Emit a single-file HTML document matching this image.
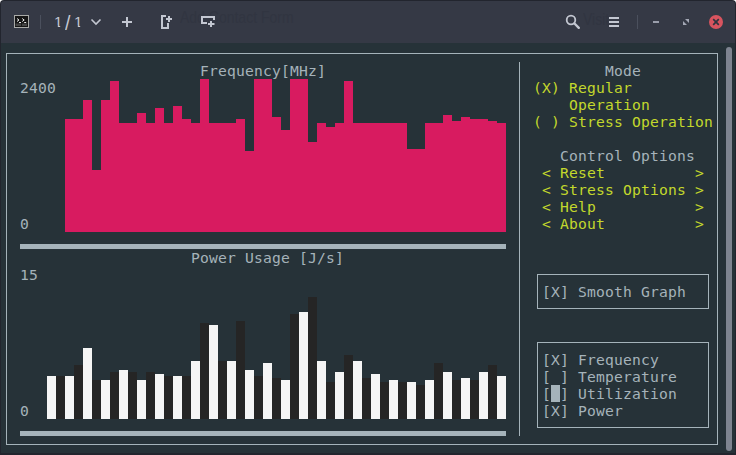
<!DOCTYPE html>
<html><head><meta charset="utf-8"><title>s-tui</title>
<style>
html,body{margin:0;padding:0;background:#fff;}
body{width:736px;height:455px;overflow:hidden;position:relative}
.abs{position:absolute}
#win{position:absolute;left:0;top:0;width:736px;height:455px;background:#22252e;border-radius:4px 4px 0 0;overflow:hidden}
#tb{position:absolute;left:1px;top:1px;width:734px;height:42px;background:#353945;border-radius:3px 3px 0 0}
#term{position:absolute;left:1px;top:43px;width:734px;height:410px;background:#263238}
.t{position:absolute;height:17px;line-height:17px;font-family:"DejaVu Sans Mono","Liberation Mono",monospace;font-size:14.6667px;letter-spacing:0.17px;white-space:pre}
.tt{font-family:"Liberation Sans",sans-serif;font-size:15px;line-height:18px;color:#c3c7d1;letter-spacing:1px}
.gh{font-family:"Liberation Sans",sans-serif;font-size:14px;line-height:16px;color:#313541;transform:scaleY(1.150);transform-origin:0 50%;white-space:pre}
#sb{position:absolute;left:726px;top:47px;width:6px;height:404px;border-radius:3px;background:#7e8490}
</style></head><body>
<div id="win">
<div id="tb"></div>
<div id="term"></div>

<div class="abs" style="left:13.500px;top:15px;width:15px;height:13px;background:#151515;border:1px solid #a9aaa8;box-sizing:border-box"></div>
<div class="abs gh" id="g1" style="left:180px;top:9px">Add Contact Form</div><div class="abs gh" id="g2" style="left:583px;top:11px">Visit</div>
<svg class="abs" style="left:0;top:0" width="736" height="44" viewBox="0 0 736 44">
 <g fill="none" stroke="#e8e8e8" stroke-width="1">
  <path d="M17 18.500l2 1.500l-2 1.500M19 22.500h2M22.200 18.500l2 1.500l-2 1.500M24.200 22.500h2"/>
 </g>
 <rect x="15.500" y="23.500" width="5.700" height="2.500" fill="#444"/><rect x="22" y="23.500" width="5" height="2.500" fill="#444"/>
 <rect x="40" y="15" width="1" height="14" fill="#4b505d"/>
 <path d="M91.500 19.500l4.500 4.500l4.500-4.500" fill="none" stroke="#c3c7d1" stroke-width="1.600"/>
 <path d="M127 17v10M122 22h10" fill="none" stroke="#c3c7d1" stroke-width="2"/>
 <!-- split v -->
 <path d="M166 16h-4v12h6v-5" fill="none" stroke="#c3c7d1" stroke-width="2"/>
 <path d="M168 16h2v6h-2zM166 18h6v2h-6z" fill="#c3c7d1"/>
 <!-- split h -->
 <path d="M207 23h-5v-6h12v3" fill="none" stroke="#c3c7d1" stroke-width="2"/>
 <path d="M210 21h2v6h-2zM208 23h6.500v2h-6.500z" fill="#c3c7d1"/>
 <!-- search -->
 <circle cx="571" cy="20" r="4.300" fill="none" stroke="#c3c7d1" stroke-width="1.800"/>
 <path d="M574.500 23.500l4.300 4.300" stroke="#c3c7d1" stroke-width="2.400" stroke-linecap="round"/>
 <!-- menu -->
 <path d="M609 18h10M609 22h10M609 26h10" stroke="#c3c7d1" stroke-width="2"/>
 <rect x="637" y="15" width="1" height="14" fill="#4b505d"/>
 <rect x="653" y="21" width="6" height="2" fill="#9a9eab"/>
 <path d="M685 19h4v4zM683 21v4h4z" fill="#a3a7b4"/>
 <circle cx="716" cy="22" r="7" fill="#d8545f"/>
 <path d="M713.200 19.200l5.600 5.600M718.800 19.200l-5.600 5.600" stroke="#2f343f" stroke-width="1.700"/>
</svg>
<div class="abs tt" style="left:54px;top:13px;clip-path:polygon(0 0,6.200px 0,6.200px 18px,3.800px 18px,3.800px 12.400px,0 12.400px)">1</div><div class="abs tt" style="left:65px;top:14.200px;transform:scale(1.300,1.320);transform-origin:0 50%">/</div><div class="abs tt" style="left:74px;top:13px;clip-path:polygon(0 0,6.200px 0,6.200px 18px,3.800px 18px,3.800px 12.400px,0 12.400px)">1</div>

<svg class="abs" style="left:0;top:0" width="736" height="455" viewBox="0 0 736 455" shape-rendering="crispEdges"><path d="M65 232V119h9V119h9V100h9V170h9V100h9V81h9V123h9V123h9V113h9V123h9V108h9V123h9V106h9V119h9V123h9V79h9V123h9V123h9V123h9V119h9V151h9V79h9V79h9V117h9V130h9V79h9V79h9V142h9V123h9V127h9V123h9V81h9V123h9V123h9V123h9V123h9V123h9V123h9V149h9V149h9V123h9V123h9V115h9V121h9V117h9V119h9V119h9V121h9V123h9V232Z" fill="#d81b60"/><rect x="47" y="376" width="9" height="43" fill="#f5f5f5"/><rect x="56" y="376" width="9" height="43" fill="#252525"/><rect x="65" y="376" width="9" height="43" fill="#f5f5f5"/><rect x="74" y="365" width="9" height="54" fill="#252525"/><rect x="83" y="348" width="9" height="71" fill="#f5f5f5"/><rect x="92" y="380" width="9" height="39" fill="#252525"/><rect x="101" y="380" width="9" height="39" fill="#f5f5f5"/><rect x="110" y="372" width="9" height="47" fill="#252525"/><rect x="119" y="370" width="9" height="49" fill="#f5f5f5"/><rect x="128" y="372" width="9" height="47" fill="#252525"/><rect x="137" y="380" width="9" height="39" fill="#f5f5f5"/><rect x="146" y="372" width="9" height="47" fill="#252525"/><rect x="155" y="374" width="9" height="45" fill="#f5f5f5"/><rect x="164" y="376" width="9" height="43" fill="#252525"/><rect x="173" y="376" width="9" height="43" fill="#f5f5f5"/><rect x="182" y="376" width="9" height="43" fill="#252525"/><rect x="191" y="361" width="9" height="58" fill="#f5f5f5"/><rect x="200" y="323" width="9" height="96" fill="#252525"/><rect x="209" y="325" width="9" height="94" fill="#f5f5f5"/><rect x="218" y="361" width="9" height="58" fill="#252525"/><rect x="227" y="361" width="9" height="58" fill="#f5f5f5"/><rect x="236" y="321" width="9" height="98" fill="#252525"/><rect x="245" y="370" width="9" height="49" fill="#f5f5f5"/><rect x="254" y="376" width="9" height="43" fill="#252525"/><rect x="263" y="363" width="9" height="56" fill="#f5f5f5"/><rect x="272" y="378" width="9" height="41" fill="#252525"/><rect x="281" y="380" width="9" height="39" fill="#f5f5f5"/><rect x="290" y="314" width="9" height="105" fill="#252525"/><rect x="299" y="312" width="9" height="107" fill="#f5f5f5"/><rect x="308" y="297" width="9" height="122" fill="#252525"/><rect x="317" y="361" width="9" height="58" fill="#f5f5f5"/><rect x="326" y="382" width="9" height="37" fill="#252525"/><rect x="335" y="372" width="9" height="47" fill="#f5f5f5"/><rect x="344" y="355" width="9" height="64" fill="#252525"/><rect x="353" y="361" width="9" height="58" fill="#f5f5f5"/><rect x="362" y="378" width="9" height="41" fill="#252525"/><rect x="371" y="374" width="9" height="45" fill="#f5f5f5"/><rect x="380" y="382" width="9" height="37" fill="#252525"/><rect x="389" y="380" width="9" height="39" fill="#f5f5f5"/><rect x="398" y="382" width="9" height="37" fill="#252525"/><rect x="407" y="382" width="9" height="37" fill="#f5f5f5"/><rect x="416" y="385" width="9" height="34" fill="#252525"/><rect x="425" y="380" width="9" height="39" fill="#f5f5f5"/><rect x="434" y="363" width="9" height="56" fill="#252525"/><rect x="443" y="372" width="9" height="47" fill="#f5f5f5"/><rect x="452" y="380" width="9" height="39" fill="#252525"/><rect x="461" y="378" width="9" height="41" fill="#f5f5f5"/><rect x="470" y="380" width="9" height="39" fill="#252525"/><rect x="479" y="372" width="9" height="47" fill="#f5f5f5"/><rect x="488" y="365" width="9" height="54" fill="#252525"/><rect x="497" y="376" width="9" height="43" fill="#f5f5f5"/><rect x="20" y="244" width="486" height="5" fill="#a5b3ba"/><rect x="20" y="431" width="486" height="5" fill="#a5b3ba"/><rect x="6.5" y="53.5" width="711" height="391" fill="none" stroke="#a5b3ba" stroke-width="1"/><rect x="519" y="62" width="1" height="374" fill="#a5b3ba"/><rect x="537.5" y="274.5" width="171" height="34" fill="none" stroke="#a5b3ba" stroke-width="1"/><rect x="537.5" y="342.5" width="171" height="85" fill="none" stroke="#a5b3ba" stroke-width="1"/><rect x="551" y="385" width="9" height="17" fill="#a5b3ba"/></svg><div class="t" style="left:200px;top:62px;color:#a5b3ba">Frequency[MHz]</div><div class="t" style="left:20px;top:79px;color:#a5b3ba">2400</div><div class="t" style="left:20px;top:215px;color:#a5b3ba">0</div><div class="t" style="left:191px;top:249px;color:#a5b3ba">Power Usage [J/s]</div><div class="t" style="left:20px;top:266px;color:#a5b3ba">15</div><div class="t" style="left:20px;top:402px;color:#a5b3ba">0</div><div class="t" style="left:605px;top:62px;color:#a5b3ba">Mode</div><div class="t" style="left:533px;top:79px;color:#c3d82c">(X) Regular</div><div class="t" style="left:569px;top:96px;color:#c3d82c">Operation</div><div class="t" style="left:533px;top:113px;color:#c3d82c">( ) Stress Operation</div><div class="t" style="left:560px;top:147px;color:#a5b3ba">Control Options</div><div class="t" style="left:542px;top:164px;color:#c3d82c">&lt; Reset          &gt;</div><div class="t" style="left:542px;top:181px;color:#c3d82c">&lt; Stress Options &gt;</div><div class="t" style="left:542px;top:198px;color:#c3d82c">&lt; Help           &gt;</div><div class="t" style="left:542px;top:215px;color:#c3d82c">&lt; About          &gt;</div><div class="t" style="left:542px;top:283px;color:#a5b3ba">[X] Smooth Graph</div><div class="t" style="left:542px;top:351px;color:#a5b3ba">[X] Frequency</div><div class="t" style="left:542px;top:368px;color:#a5b3ba">[ ] Temperature</div><div class="t" style="left:542px;top:385px;color:#a5b3ba">[ ] Utilization</div><div class="t" style="left:542px;top:402px;color:#a5b3ba">[X] Power</div>
<div id="sb"></div>
</div>
</body></html>
